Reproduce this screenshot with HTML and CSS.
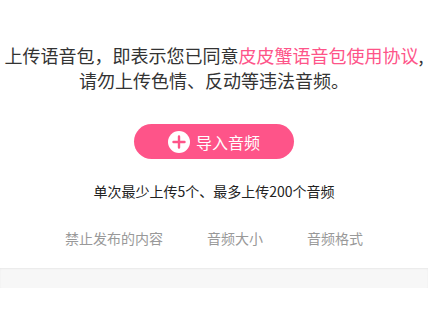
FILE: index.html
```html
<!DOCTYPE html>
<html lang="zh">
<head>
<meta charset="utf-8">
<link rel="stylesheet" href="styles.css">
</head>
<body>
<main class="page">
  <p class="intro">上传语音包，即表示您已同意<span class="link">皮皮蟹语音包使用协议</span>,<br>请勿上传色情、反动等违法音频。</p>
  <button class="import-btn" type="button">
    <span class="plus-icon">
      <svg viewBox="0 0 22 22" width="22" height="22"><circle cx="11" cy="11" r="11" fill="#fff"/><path d="M11 5.5v11M5.5 11h11" stroke="#fe5489" stroke-width="2.4" stroke-linecap="round"/></svg>
    </span>
    <span class="btn-label">导入音频</span>
  </button>
  <p class="note">单次最少上传5个、最多上传200个音频</p>
  <nav class="tabs">
    <span class="tab">禁止发布的内容</span>
    <span class="tab">音频大小</span>
    <span class="tab">音频格式</span>
  </nav>
  <div class="band"></div>
</main>
</body>
</html>
```
FILE: styles.css
```css
html, body {
  margin: 0;
  padding: 0;
  background: #fff;
}
body {
  font-family: "Noto Sans CJK SC", "Noto Sans", sans-serif;
}
.page {
  display: flex;
  flex-direction: column;
  align-items: center;
  padding-top: 43px;
}
.intro {
  margin: 0;
  font-size: 18px;
  line-height: 25px;
  color: #333;
  text-align: center;
  white-space: nowrap;
}
.link {
  color: #fe5489;
}
.import-btn {
  margin-top: 31px;
  width: 160px;
  height: 35px;
  border: none;
  border-radius: 18px;
  background: #fe5489;
  display: flex;
  align-items: center;
  justify-content: center;
  gap: 6px;
  padding: 0;
  font-family: inherit;
  cursor: pointer;
}
.plus-icon {
  display: flex;
  width: 22px;
  height: 22px;
}
.btn-label {
  color: #fff;
  font-size: 16px;
  line-height: 20px;
}
.note {
  margin: 22px 0 0;
  font-size: 14px;
  line-height: 20px;
  color: #222;
}
.tabs {
  margin-top: 27px;
  display: flex;
  gap: 44px;
  font-size: 14px;
  line-height: 20px;
  color: #999;
}
.band {
  margin-top: 20px;
  align-self: stretch;
  height: 20px;
  background: #f7f7f7;
  box-shadow: inset 0 1px 2px rgba(0,0,0,0.06);
}
```
